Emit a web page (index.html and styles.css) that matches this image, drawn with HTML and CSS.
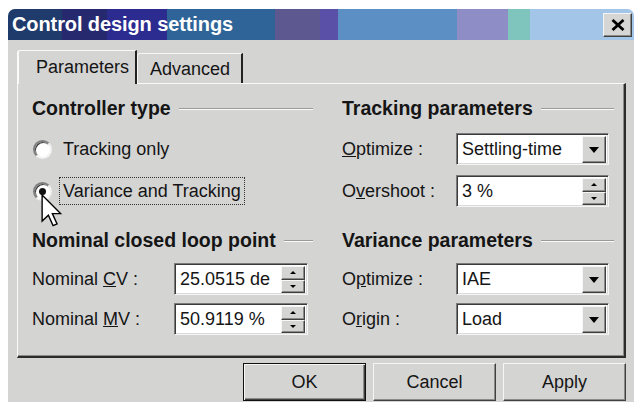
FILE: index.html
```html
<!DOCTYPE html>
<html lang="en">
<head>
<meta charset="utf-8">
<title>Control design settings</title>
<link rel="stylesheet" href="styles.css">
</head>
<body>
<div class="window">
  <div class="titlebar">
    <span class="title">Control design settings</span>
    <button class="close" type="button" aria-label="Close">
      <svg width="14" height="12" viewBox="0 0 14 12"><path d="M1.5 1 L12.5 11 M12.5 1 L1.5 11" stroke="#000" stroke-width="2.8" fill="none"/></svg>
    </button>
  </div>

  <div class="content">
    <div class="tabs">
      <div class="tab active">Parameters</div>
      <div class="tab">Advanced</div>
    </div>

    <div class="panel">
      <section class="group upper">
        <div class="group-head"><span>Controller type</span><i class="rule"></i></div>
        <label class="radio"><span class="dot"></span><span class="radio-text">Tracking only</span></label>
        <label class="radio"><span class="dot checked"></span><span class="radio-text focused">Variance and Tracking</span></label>
      </section>

      <section class="group upper">
        <div class="group-head"><span>Tracking parameters</span><i class="rule"></i></div>
        <div class="field">
          <span><u>O</u>ptimize :</span>
          <div class="box wide">
            <span class="value">Settling-time</span>
            <span class="drop"><i class="tri-down"></i></span>
          </div>
        </div>
        <div class="field">
          <span>O<u>v</u>ershoot :</span>
          <div class="box wide">
            <span class="value">3 %</span>
            <span class="spin"><span class="spin-btn"><i class="tri-up"></i></span><span class="spin-btn"><i class="tri-small-down"></i></span></span>
          </div>
        </div>
      </section>

      <section class="group lower">
        <div class="group-head"><span>Nominal closed loop point</span><i class="rule"></i></div>
        <div class="field">
          <span>Nominal <u>C</u>V :</span>
          <div class="box narrow">
            <span class="value">25.0515 de</span>
            <span class="spin"><span class="spin-btn"><i class="tri-up"></i></span><span class="spin-btn"><i class="tri-small-down"></i></span></span>
          </div>
        </div>
        <div class="field">
          <span>Nominal <u>M</u>V :</span>
          <div class="box narrow">
            <span class="value">50.9119 %</span>
            <span class="spin"><span class="spin-btn"><i class="tri-up"></i></span><span class="spin-btn"><i class="tri-small-down"></i></span></span>
          </div>
        </div>
      </section>

      <section class="group lower">
        <div class="group-head"><span>Variance parameters</span><i class="rule"></i></div>
        <div class="field">
          <span>O<u>p</u>timize :</span>
          <div class="box wide">
            <span class="value">IAE</span>
            <span class="drop"><i class="tri-down"></i></span>
          </div>
        </div>
        <div class="field">
          <span>O<u>r</u>igin :</span>
          <div class="box wide">
            <span class="value">Load</span>
            <span class="drop"><i class="tri-down"></i></span>
          </div>
        </div>
      </section>
    </div>

    <div class="actions">
      <button class="btn default" type="button">OK</button>
      <button class="btn" type="button">Cancel</button>
      <button class="btn" type="button">Apply</button>
    </div>
  </div>

  <!-- mouse pointer resting on the selected radio -->
  <svg class="pointer" width="21" height="33" viewBox="0 0 12 19">
    <path d="M0.6 0.6 L0.6 15.6 L4.2 12.2 L6.9 18.2 L9.2 17.2 L6.5 11.3 L11.2 11.3 Z" fill="#fff" stroke="#000" stroke-width="0.8" stroke-linejoin="miter"/>
  </svg>
</div>
</body>
</html>
```

FILE: styles.css
```css
* {
  box-sizing: border-box;
}

html,
body {
  margin: 0;
  padding: 0;
  background: #fff;
}

body {
  font-family: "Liberation Sans", Arial, sans-serif;
  font-size: 18px;
  color: #151515;
}

button {
  font-family: inherit;
  font-size: inherit;
  color: inherit;
  padding: 0;
  margin: 0;
}

/* window frame */
.window {
  position: relative;
  margin: 9px 0 0 8px;
  width: 626px;
  height: 393px;
  background: #d4d4d3;
  border-radius: 7px 7px 0 0;
  overflow: hidden;
}

.titlebar {
  height: 31px;
  display: flex;
  align-items: center;
  justify-content: space-between;
  padding: 0 2px 0 4px;
  background: linear-gradient(to right,
    #1f3b6b 0 54px,
    #26296e 54px 99px,
    #2b2b90 99px 159px,
    #2e6497 159px 267px,
    #5d5990 267px 312px,
    #5a50a8 312px 330px,
    #5c90c4 330px 449px,
    #8f8dc6 449px 500px,
    #80c5bd 500px 522px,
    #a3c5e8 522px);
}

.title {
  color: #fff;
  font-weight: bold;
  font-size: 20px;
  letter-spacing: -0.1px;
}

.close {
  width: 29px;
  height: 24px;
  display: flex;
  align-items: center;
  justify-content: center;
  background: #d6d6d4;
  border: 1px solid;
  border-color: #f4f4f4 #404040 #404040 #f4f4f4;
  box-shadow: inset -1px -1px 0 #8a8a8a;
}

.content {
  padding: 10px 8px 0 9px;
}

/* tab strip */
.tabs {
  display: flex;
  align-items: flex-end;
  height: 33px;
}

.tab {
  height: 30px;
  display: flex;
  align-items: center;
  padding: 2px 11px 0 12px;
  border-top: 1px solid #f6f6f6;
  border-left: 1px solid #f6f6f6;
  border-right: 2px solid #222;
  border-radius: 3px 0 0 0;
}

.tab.active {
  position: relative;
  z-index: 1;
  height: 34px;
  margin-bottom: -1px;
  padding: 0 6px 0 17px;
  background: #d4d4d3;
  border-top-color: #fafafa;
  border-left: 2px solid #fafafa;
}

/* tab page */
.panel {
  height: 275px;
  display: grid;
  grid-template-columns: 281px 272px;
  column-gap: 29px;
  row-gap: 21px;
  align-content: start;
  padding: 12px 10px 0 14px;
  border: 1px solid;
  border-width: 1px 2px 2px 1px;
  border-color: #fafafa #2c2c2c #2c2c2c #fafafa;
  box-shadow: inset -1px -1px 0 #8a8a8a;
}

.group {
  display: flex;
  flex-direction: column;
}

.group.upper .group-head {
  margin-bottom: 13px;
}

.group.upper > * + * + * {
  margin-top: 10px;
}

.group.lower .group-head {
  margin-bottom: 11px;
}

.group.lower > * + * + * {
  margin-top: 8px;
}

.group-head {
  height: 24px;
  display: flex;
  align-items: center;
  font-weight: bold;
  font-size: 19.5px;
}

.rule {
  flex: 1;
  height: 2px;
  margin-left: 8px;
  margin-top: 1px;
  border-top: 1px solid #9a9a9a;
  border-bottom: 1px solid #fbfbfb;
}

/* radio buttons */
.radio {
  position: relative;
  height: 32px;
  display: flex;
  align-items: center;
}

.dot {
  position: relative;
  width: 19px;
  height: 19px;
  margin-left: 1px;
  border-radius: 50%;
  background: #fff;
  border: 2px solid;
  border-color: #7e7e7e #f2f2f2 #f2f2f2 #7e7e7e;
  box-shadow: inset 1px 1px 0 #3c3c3c;
}

.dot.checked::after {
  content: "";
  position: absolute;
  left: 4px;
  top: 4px;
  width: 7px;
  height: 7px;
  border-radius: 50%;
  background: #111;
}

.radio-text {
  margin-left: 7px;
  padding: 2px 3px 1px;
  border: 1px dotted transparent;
  line-height: 23px;
}

.radio-text.focused {
  border-color: #333;
}

/* labelled edit / combo rows */
.field {
  height: 32px;
  display: flex;
  align-items: center;
  justify-content: space-between;
  padding-right: 5px;
}

.box {
  height: 32px;
  display: flex;
  background: #fff;
  border: 1px solid;
  border-color: #7a7a7a #f6f6f6 #f6f6f6 #7a7a7a;
  box-shadow: inset 1px 1px 0 #3a3a3a, inset -1px -1px 0 #dadada;
  padding: 2px 2px 1px 2px;
}

.box.narrow {
  width: 134px;
}

.box.wide {
  width: 153px;
}

.value {
  flex: 1;
  padding-left: 3px;
  line-height: 27px;
  white-space: nowrap;
  overflow: hidden;
}

.drop {
  width: 24px;
  display: flex;
  align-items: center;
  justify-content: center;
  background: #d4d4d3;
  border: 1px solid;
  border-color: #f6f6f6 #404040 #404040 #f6f6f6;
  box-shadow: inset -1px -1px 0 #8a8a8a;
}

.tri-down {
  width: 0;
  height: 0;
  border-left: 5px solid transparent;
  border-right: 5px solid transparent;
  border-top: 6px solid #000;
  margin-top: 1px;
}

.spin {
  width: 24px;
  display: flex;
  flex-direction: column;
}

.spin-btn {
  flex: 1;
  display: flex;
  align-items: center;
  justify-content: center;
  background: #d4d4d3;
  border: 1px solid;
  border-color: #f6f6f6 #404040 #404040 #f6f6f6;
  box-shadow: inset -1px -1px 0 #8a8a8a;
}

.tri-up {
  width: 0;
  height: 0;
  border-left: 3px solid transparent;
  border-right: 3px solid transparent;
  border-bottom: 3px solid #000;
}

.tri-small-down {
  width: 0;
  height: 0;
  border-left: 3px solid transparent;
  border-right: 3px solid transparent;
  border-top: 3px solid #000;
}

/* dialog buttons */
.actions {
  display: flex;
  justify-content: flex-end;
  gap: 7px;
  margin-top: 5px;
}

.btn {
  width: 123px;
  height: 38px;
  background: #d4d4d3;
  border: 1px solid;
  border-color: #f6f6f6 #404040 #404040 #f6f6f6;
  box-shadow: inset -1px -1px 0 #8a8a8a;
}

.btn.default {
  border-color: #111;
  box-shadow: inset 1px 1px 0 #f6f6f6, inset -1px -1px 0 #404040, inset -2px -2px 0 #8a8a8a;
}

.pointer {
  position: absolute;
  left: 33px;
  top: 185px;
}
```
